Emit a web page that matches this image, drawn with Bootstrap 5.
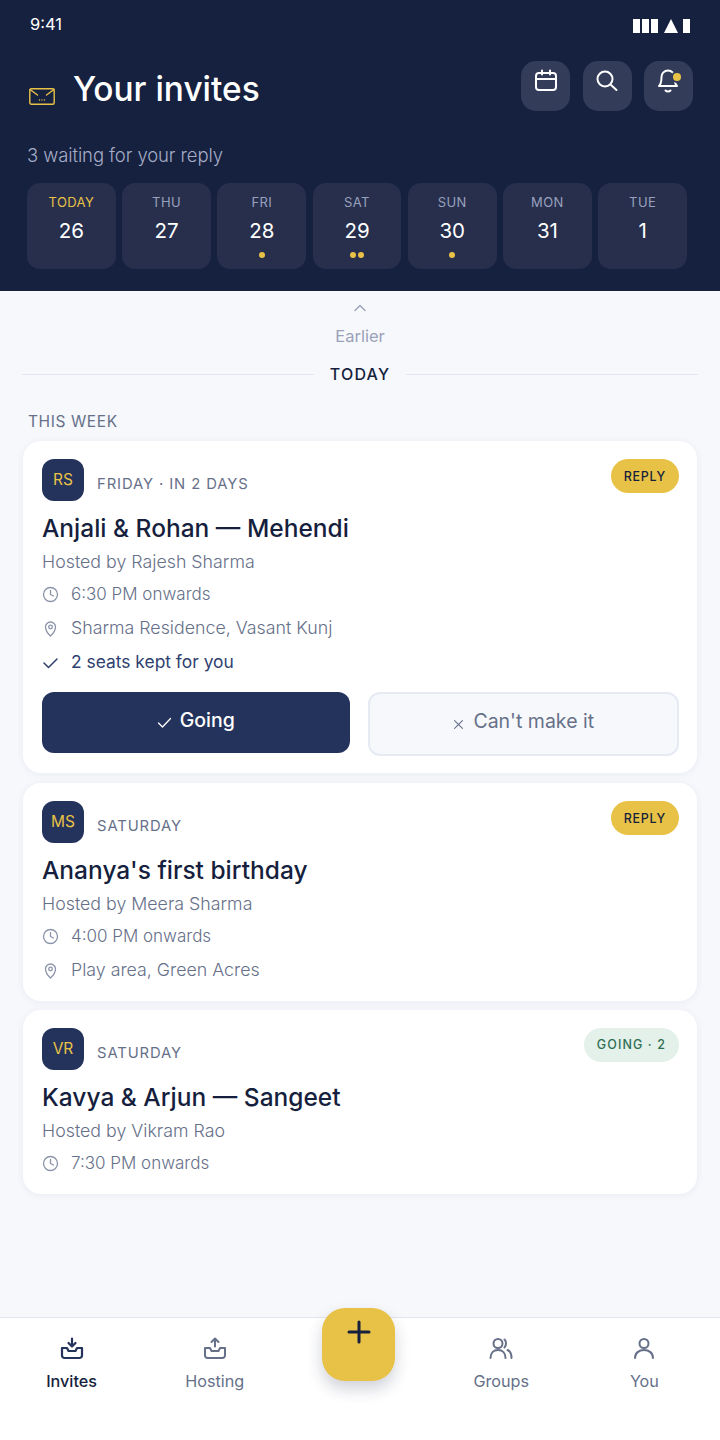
<!DOCTYPE html>
<html lang="en"><head><meta charset="utf-8"><title>Your invites</title>
<link href="https://cdn.jsdelivr.net/npm/bootstrap@5.3.0/dist/css/bootstrap.min.css" rel="stylesheet">
<style>
html,body{height:100%}
body{font-family:Inter,"Liberation Sans",sans-serif;background:#f6f8fc;color:#161f3d;overflow:hidden}
svg{display:block;fill:none;stroke:currentColor;stroke-linecap:round;stroke-linejoin:round}
.app-shell{height:1440px;position:relative}
.top-head{background:#16203f;height:291px;padding:13px 33px 0 27px;color:#fff}
.stat-row{height:22px;padding:0 0 0 3px;margin-right:-3px;font-size:16.500px;font-weight:400}
.stat-ic{display:flex;gap:2px;align-items:center;margin-top:4px}
.stat-ic i{display:block;background:#fff;width:7px;height:14px}
.stat-ic i.tri{width:0;height:0;background:none;border:7px solid transparent;border-top:0;border-bottom:14px solid #fff;margin:0 3px 0 4px}
.title-row{margin-top:26px;height:50px;margin-right:-6px}
.env{color:#e8c246;margin:27px 18px 0 2px;width:26px;flex:none}
.head-title{font-size:33.400px;font-weight:500;margin:0;line-height:57px}
.ic-btn{width:49px;height:50px;border-radius:15px;background:#333c59;border:0;padding:0;color:#fff;position:relative;display:flex;align-items:flex-start}
.ic-btn svg{margin:8px auto 0}
.ic-btn svg.bell-ic{margin-top:7px}
.bell-dot{position:absolute;left:29px;top:12px;width:8px;height:8px;border-radius:50%;background:#e8c246;box-shadow:0 0 0 2px #333c59}
.sub-line{font-size:18.500px;color:#a4acc6;margin-top:32px;line-height:24px;font-weight:300;letter-spacing:-.1px}
.day-grid{display:grid;grid-template-columns:repeat(7,1fr);gap:6.5px;margin-top:16px}
.day-cell{height:86px;border-radius:13px;background:#272f4d;text-align:center;position:relative;padding-top:11px}
.day-name{font-size:13px;line-height:17px;color:#98a1bd;letter-spacing:.4px}
.day-name.now{color:#e8c246}
.day-num{font-size:20.500px;line-height:28px;margin-top:6px;font-weight:400}
.dots{position:absolute;left:0;right:0;top:69px;display:flex;justify-content:center;gap:2px}
.dots i{display:block;width:6px;height:6px;border-radius:50%;background:#e8c246}
.earlier{color:#9aa2b8;font-size:16.500px;text-align:center;height:72px;padding-top:13px}
.earlier svg{margin:0 auto;color:#9aa2b8}
.earlier div{margin-top:13px;line-height:22px}
.today-row{margin:0 22px;height:22px;gap:16px;font-size:16px;font-weight:500;letter-spacing:1.200px;color:#161f3d;line-height:22px}
.today-row span{flex:1;height:1px;background:#e3e6ee}
.week-label{margin:26px 0 0 28px;font-size:15.500px;line-height:22px;color:#667089;letter-spacing:.6px;font-weight:400}
.inv-card{margin:9px 23px 0;border:0;border-radius:18px;background:#fff;padding:18px 18px 0 19px;box-shadow:0 1px 8px rgba(22,32,63,.06)}
.week-label + .inv-card{margin-top:8px}
.avatar-box{width:42px;height:42px;border-radius:12px;background:#24335c;color:#e8c246;font-size:15.500px;font-weight:400;line-height:42px;text-align:center;flex:none}
.when{font-size:14.800px;color:#667089;letter-spacing:.9px;margin:15px 0 0 13px;line-height:20px}
.pill{height:34px;border-radius:17px;font-size:12.500px;font-weight:500;letter-spacing:.7px;line-height:35px;padding:0 13px;background:#e8c246;color:#161f3d}
.pill.ok{background:#e3f1ea;color:#2f6e52;letter-spacing:1.100px;line-height:33px}
.ev-title{font-size:24.500px;font-weight:500;line-height:30px;margin:12px 0 0;color:#161f3d}
.host{font-size:17.800px;color:#667089;line-height:21px;margin-top:8px;font-weight:300}
.meta{font-size:17.800px;color:#667089;line-height:24px;margin-top:10px;gap:12px;font-weight:300}
.meta.timing{font-size:17px}
.meta svg{color:#8b93a9;width:17px;flex:none}
.meta.seat{color:#2f3f70;font-weight:400;font-size:17.400px}
.meta.seat svg{color:#2f3f70}
.act-row{gap:18px;margin-top:18px;padding-bottom:17px;align-items:flex-start}
.act-a,.act-b{flex:1;font-size:19.500px;display:flex;align-items:center;justify-content:center;gap:8px;padding:0 0 4px;border-radius:12px}
.act-a svg,.act-b svg{margin-top:4px}
.act-a{height:61px;background:#24335c;border:0;color:#fff;font-weight:500}
.act-b{height:64px;background:#f6f8fc;border:2px solid #e6eaf2;color:#667089;font-weight:400}
.tab-bar{position:absolute;left:0;right:0;top:1317px;height:123px;background:#fff;border-top:1px solid #e3e6ee;padding-right:4px;display:grid;grid-template-columns:repeat(5,1fr)}
.tab-item{text-align:center;color:#667089;font-size:16.200px;padding-top:19px}
.tab-item svg{margin:0 auto;width:24px}
.tab-item div{margin-top:9px;line-height:22px;font-weight:400}
.tab-item.on{color:#24335c}
.tab-item.on div{color:#161f3d;font-weight:500}
.fab-btn{position:absolute;left:322px;top:1308px;width:73px;height:73px;border-radius:23px;background:#e8c246;color:#161f3d;box-shadow:0 8px 16px rgba(22,32,63,.2);border:0;padding:0}
.fab-btn svg{margin:-25px auto 0}
</style></head><body>
<div class="app-shell">
<header class="top-head">
 <div class="stat-row d-flex justify-content-between align-items-center"><span>9:41</span>
  <span class="stat-ic"><i></i><i></i><i></i><i class="tri"></i><i></i></span></div>
 <div class="title-row d-flex align-items-start">
  <svg class="env" width="26" height="17" viewBox="0 0 26 17" stroke-width="1.400"><rect x=".8" y=".8" width="24.400" height="15.400" rx="1.500"/><path d="M1 1.500 8.500 7M25 1.500 17.500 7M10.500 12h.01M13 12h.01M15.500 12h.01"/></svg>
  <h1 class="head-title flex-grow-1">Your invites</h1>
  <div class="d-flex" style="gap:12.500px">
   <button class="ic-btn"><svg width="24" height="24" viewBox="0 0 24 24" stroke-width="2"><rect x="2" y="4" width="20" height="17" rx="3"/><path d="M2 10h20M8 1.500v4M16 1.500v4"/></svg></button>
   <button class="ic-btn"><svg width="24" height="24" viewBox="0 0 24 24" stroke-width="2"><circle cx="10" cy="10" r="7.500"/><path d="m16 16 5.500 5"/></svg></button>
   <button class="ic-btn"><svg class="bell-ic" width="26" height="26" viewBox="0 0 26 26" stroke-width="2"><path d="M3 18h18c-2-2-2.500-4-2.500-9a6.500 6.500 0 0 0-13 0c0 5-.5 7-2.500 9zM9.500 22.500a3.500 3.500 0 0 0 5 0"/></svg><span class="bell-dot"></span></button>
  </div>
 </div>
 <div class="sub-line">3 waiting for your reply</div>
 <div class="day-grid">
  <div class="day-cell"><div class="day-name now">TODAY</div><div class="day-num">26</div></div>
  <div class="day-cell"><div class="day-name">THU</div><div class="day-num">27</div></div>
  <div class="day-cell"><div class="day-name">FRI</div><div class="day-num">28</div><div class="dots"><i></i></div></div>
  <div class="day-cell"><div class="day-name">SAT</div><div class="day-num">29</div><div class="dots"><i></i><i></i></div></div>
  <div class="day-cell"><div class="day-name">SUN</div><div class="day-num">30</div><div class="dots"><i></i></div></div>
  <div class="day-cell"><div class="day-name">MON</div><div class="day-num">31</div></div>
  <div class="day-cell"><div class="day-name">TUE</div><div class="day-num">1</div></div>
 </div>
</header>
<div class="earlier"><svg width="14" height="8" viewBox="0 0 14 8" stroke-width="1.400"><path d="m2 6.500 5-5 5 5"/></svg><div>Earlier</div></div>
<div class="today-row d-flex align-items-center"><span></span>TODAY<span></span></div>
<div class="week-label">THIS WEEK</div>

<div class="card inv-card">
 <div class="d-flex align-items-start"><div class="avatar-box">RS</div><div class="when flex-grow-1">FRIDAY · IN 2 DAYS</div><span class="pill">REPLY</span></div>
 <h2 class="ev-title">Anjali &amp; Rohan — Mehendi</h2>
 <div class="host">Hosted by Rajesh Sharma</div>
 <div class="meta timing d-flex align-items-center"><svg width="17" height="17" viewBox="0 0 17 17" stroke-width="1.300"><circle cx="8.500" cy="8.500" r="7"/><path d="M8.500 4.500v4l3 1.500"/></svg>6:30 PM onwards</div>
 <div class="meta d-flex align-items-center"><svg width="17" height="17" viewBox="0 0 17 17" stroke-width="1.300"><path d="M8.500 16s5-4.500 5-9a5 5 0 0 0-10 0c0 4.500 5 9 5 9z"/><circle cx="8.500" cy="7" r="1.800"/></svg>Sharma Residence, Vasant Kunj</div>
 <div class="meta seat d-flex align-items-center"><svg width="17" height="17" viewBox="0 0 17 17" stroke-width="1.500"><path d="m2 9 4.500 4.500L15 5"/></svg>2 seats kept for you</div>
 <div class="act-row d-flex">
  <button class="btn act-a"><svg width="15" height="15" viewBox="0 0 15 15" stroke-width="1.300"><path d="m1.500 8 4 4 8-8.500"/></svg>Going</button>
  <button class="btn act-b"><svg width="13" height="13" viewBox="0 0 15 15" stroke-width="1.300"><path d="m3 3 9 9M12 3l-9 9"/></svg>Can't make it</button>
 </div>
</div>

<div class="card inv-card" style="height:218px;margin-top:10px">
 <div class="d-flex align-items-start"><div class="avatar-box">MS</div><div class="when flex-grow-1">SATURDAY</div><span class="pill">REPLY</span></div>
 <h2 class="ev-title">Ananya's first birthday</h2>
 <div class="host">Hosted by Meera Sharma</div>
 <div class="meta timing d-flex align-items-center"><svg width="17" height="17" viewBox="0 0 17 17" stroke-width="1.300"><circle cx="8.500" cy="8.500" r="7"/><path d="M8.500 4.500v4l3 1.500"/></svg>4:00 PM onwards</div>
 <div class="meta d-flex align-items-center"><svg width="17" height="17" viewBox="0 0 17 17" stroke-width="1.300"><path d="M8.500 16s5-4.500 5-9a5 5 0 0 0-10 0c0 4.500 5 9 5 9z"/><circle cx="8.500" cy="7" r="1.800"/></svg>Play area, Green Acres</div>
</div>

<div class="card inv-card" style="height:184px">
 <div class="d-flex align-items-start"><div class="avatar-box">VR</div><div class="when flex-grow-1">SATURDAY</div><span class="pill ok">GOING · 2</span></div>
 <h2 class="ev-title">Kavya &amp; Arjun — Sangeet</h2>
 <div class="host">Hosted by Vikram Rao</div>
 <div class="meta timing d-flex align-items-center"><svg width="17" height="17" viewBox="0 0 17 17" stroke-width="1.300"><circle cx="8.500" cy="8.500" r="7"/><path d="M8.500 4.500v4l3 1.500"/></svg>7:30 PM onwards</div>
</div>

<nav class="tab-bar">
 <div class="tab-item on"><svg width="24" height="24" viewBox="0 0 24 24" stroke-width="2.200"><path d="M12 1.500v8M8.500 6 12 9.500 15.500 6M7 11H2v7.500A2.500 2.500 0 0 0 4.500 21h15a2.500 2.500 0 0 0 2.500-2.500V11h-5l-1.500 3h-7z"/></svg><div>Invites</div></div>
 <div class="tab-item"><svg width="24" height="24" viewBox="0 0 24 24" stroke-width="2"><path d="M12 9.500v-8M8.500 5 12 1.500 15.500 5M7 11H2v7.500A2.500 2.500 0 0 0 4.500 21h15a2.500 2.500 0 0 0 2.500-2.500V11h-5l-1.500 3h-7z"/></svg><div>Hosting</div></div>
 <div></div>
 <div class="tab-item"><svg width="24" height="24" viewBox="0 0 24 24" stroke-width="2"><circle cx="9" cy="6.500" r="4.500"/><path d="M1.500 21c0-5 3-8 7.500-8s7.500 3 7.500 8M15.500 2.500c2 1.500 2 6 0 8M18.500 13c2.500 1 4 4 4 8"/></svg><div>Groups</div></div>
 <div class="tab-item"><svg width="24" height="24" viewBox="0 0 24 24" stroke-width="2"><circle cx="12" cy="6.500" r="4.500"/><path d="M3 21c0-5 4-8 9-8s9 3 9 8"/></svg><div>You</div></div>
</nav>
<button class="fab-btn"><svg width="26" height="26" viewBox="0 0 26 26" stroke-width="3"><path d="M13 3v20M3 13h20"/></svg></button>
</div>
</body></html>
